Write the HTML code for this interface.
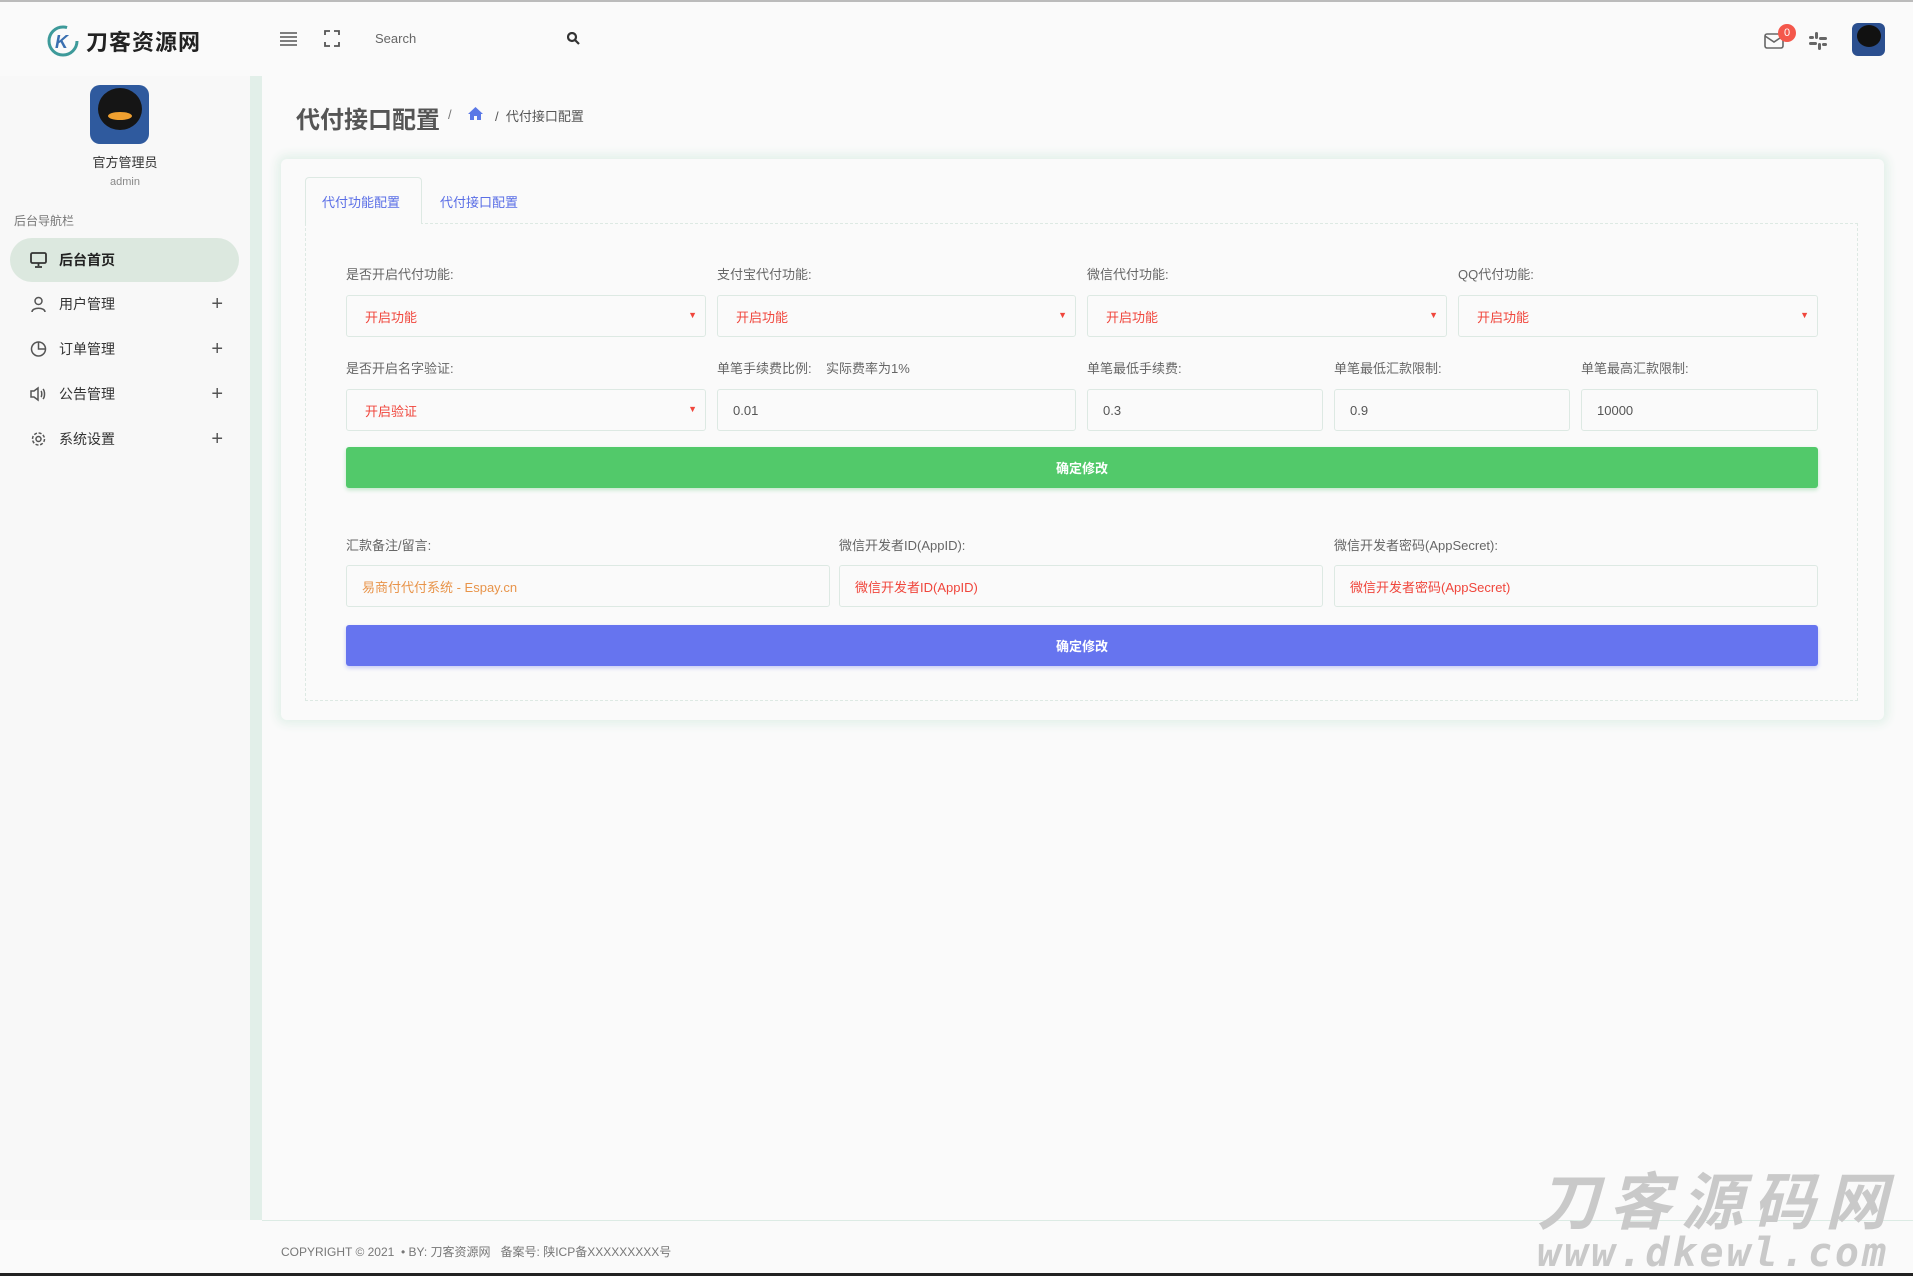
<!DOCTYPE html>
<html><head><meta charset="utf-8"><style>
*{box-sizing:border-box;margin:0;padding:0}
body{width:1913px;height:1276px;background:#fafafa;font-family:"Liberation Sans","Noto Sans CJK SC",sans-serif;position:relative;overflow:hidden;color:#555}
.abs{position:absolute}
.topbar{left:0;top:0;width:1913px;height:2px;background:#bbb}
.side{left:0;top:76px;width:250px;height:1144px;background:#f8f8f8}
.sideborder{left:250px;top:76px;width:12px;height:1144px;background:#e2efe9}
.nav{left:10px;width:229px;height:44px;border-radius:22px;font-size:14px;color:#333;display:flex;align-items:center;padding-left:20px}
.nav svg{margin-right:12px}
.nav .plus{position:absolute;right:16px;font-size:20px;color:#555}
.card{left:281px;top:159px;width:1603px;height:561px;background:#fafafa;border-radius:6px;box-shadow:0 0 10px 4px #e2f0e9}
.inner{left:305px;top:223px;width:1553px;height:478px;border:1px dashed #dde9e3}
.tab{left:305px;top:177px;width:117px;height:47px;border:1px solid #dde9e3;border-bottom:none;background:#fafafa;border-radius:4px 4px 0 0}
.lbl{font-size:13px;color:#666}
.box{height:42px;border:1px solid #dde9e3;border-radius:3px;background:#fafafa;font-size:13px;display:flex;align-items:center;padding-left:18px}
.red{color:#f0463c}
.arr{position:absolute;right:8px;top:14px;font-size:9px;color:#f0463c}
.btn{left:346px;width:1472px;height:41px;border-radius:3px;color:#fff;font-size:13px;font-weight:bold;display:flex;align-items:center;justify-content:center}
</style></head><body>
<div class="abs topbar"></div>
<svg class="abs" style="left:46px;top:24px" width="34" height="34" viewBox="0 0 34 34"><circle cx="17" cy="17" r="14" fill="none" stroke="#3d9a9a" stroke-width="3" stroke-dasharray="70 18"/><text x="9" y="24" font-size="18" font-weight="bold" fill="#3a6fb0" font-style="italic">K</text></svg>
<div class="abs" style="left:86px;top:25px;font-size:22px;font-weight:bold;color:#222;letter-spacing:1px">刀客资源网</div>
<svg class="abs" style="left:280px;top:31px" width="17" height="15"><path d="M0 2h17M0 6h17M0 10h17M0 14h17" stroke="#555" stroke-width="1.6"/></svg>
<svg class="abs" style="left:324px;top:30px" width="16" height="17" fill="none" stroke="#555" stroke-width="1.8"><path d="M1 5V1h5M10 1h5v4M15 12v4h-5M6 16H1v-4"/></svg>
<div class="abs" style="left:375px;top:31px;font-size:13px;color:#666">Search</div>
<svg class="abs" style="left:567px;top:32px" width="13" height="13" fill="none" stroke="#333" stroke-width="2.2"><circle cx="5" cy="5" r="4"/><path d="M8 8l4 4"/></svg>
<svg class="abs" style="left:1764px;top:33px" width="20" height="16" fill="none" stroke="#666" stroke-width="1.6"><rect x="1" y="1" width="18" height="14" rx="2"/><path d="M1 3l9 6 9-6"/></svg>
<div class="abs" style="left:1778px;top:24px;width:18px;height:18px;border-radius:9px;background:#f4574b;color:#fff;font-size:11px;text-align:center;line-height:18px">0</div>
<svg class="abs" style="left:1808px;top:32px" width="20" height="18" fill="#666"><rect x="7" y="0" width="3" height="7" rx="1.5"/><rect x="11" y="5" width="8" height="3" rx="1.5"/><rect x="10" y="11" width="3" height="7" rx="1.5"/><rect x="1" y="10" width="8" height="3" rx="1.5"/><rect x="1" y="4" width="5" height="3" rx="1.5"/><rect x="14" y="11" width="5" height="3" rx="1.5"/></svg>
<div class="abs" style="left:1852px;top:23px;width:33px;height:33px;border-radius:6px;background:#2b4f8f;overflow:hidden"><div style="width:24px;height:22px;background:#111;border-radius:50%;margin:2px auto 0"></div></div>
<div class="abs side"></div>
<div class="abs sideborder"></div>
<div class="abs" style="left:90px;top:85px;width:59px;height:59px;border-radius:10px;background:#2f5a9e;overflow:hidden"><div style="width:44px;height:42px;background:#151515;border-radius:50%;margin:3px auto 0;position:relative"><div style="position:absolute;left:10px;top:24px;width:24px;height:8px;background:#f0a030;border-radius:50%"></div></div></div>
<div class="abs" style="left:0;width:250px;top:152px;text-align:center;font-size:13px;color:#333">官方管理员</div>
<div class="abs" style="left:0;width:250px;top:176px;text-align:center;font-size:11px;color:#888">admin</div>
<div class="abs" style="left:14px;top:212px;font-size:12px;color:#777">后台导航栏</div>
<div class="abs nav" style="top:238px;background:#dce8df;font-weight:bold;color:#222"><svg width="17" height="16" fill="none" stroke="#333" stroke-width="1.8"><rect x="1" y="1" width="15" height="10" rx="1.5"/><path d="M8.5 11v3M5 15h7"/></svg>后台首页</div>
<div class="abs nav" style="top:282px"><svg width="17" height="16" fill="none" stroke="#555" stroke-width="1.5"><circle cx="8.5" cy="5" r="3.5"/><path d="M2 16c0-5 13-5 13 0"/></svg>用户管理<span class="plus">+</span></div>
<div class="abs nav" style="top:327px"><svg width="17" height="16" fill="none" stroke="#555" stroke-width="1.5"><circle cx="8.5" cy="8" r="7"/><path d="M8.5 1v7h7"/></svg>订单管理<span class="plus">+</span></div>
<div class="abs nav" style="top:372px"><svg width="17" height="16" fill="none" stroke="#555" stroke-width="1.5"><path d="M1 5h3l4-3v12l-4-3H1z"/><path d="M11 5c1 1 1 5 0 6M13 3c2 2 2 8 0 10"/></svg>公告管理<span class="plus">+</span></div>
<div class="abs nav" style="top:417px"><svg width="17" height="16" fill="none" stroke="#555" stroke-width="1.5"><circle cx="8.5" cy="8" r="2.5"/><circle cx="8.5" cy="8" r="6" stroke-dasharray="3 1.7"/></svg>系统设置<span class="plus">+</span></div>
<div class="abs" style="left:296px;top:100px;font-size:24px;font-weight:bold;color:#555">代付接口配置</div>
<div class="abs" style="left:448px;top:107px;font-size:13px;color:#777">/</div>
<svg class="abs" style="left:468px;top:107px" width="15" height="13" fill="#5a78e6"><path d="M7.5 0L0 7h2v6h4V9h3v4h4V7h2z"/></svg>
<div class="abs" style="left:495px;top:106px;font-size:13px;color:#555">/&nbsp; 代付接口配置</div>
<div class="abs card"></div>
<div class="abs inner"></div>
<div class="abs tab"></div>
<div class="abs" style="left:322px;top:192px;font-size:13px;color:#5a6ee6">代付功能配置</div>
<div class="abs" style="left:440px;top:192px;font-size:13px;color:#5a6ee6">代付接口配置</div>
<div class="abs lbl" style="left:346px;top:264px">是否开启代付功能:</div>
<div class="abs lbl" style="left:717px;top:264px">支付宝代付功能:</div>
<div class="abs lbl" style="left:1087px;top:264px">微信代付功能:</div>
<div class="abs lbl" style="left:1458px;top:264px">QQ代付功能:</div>
<div class="abs box red" style="left:346px;top:295px;width:360px">开启功能<span class="arr">▼</span></div>
<div class="abs box red" style="left:717px;top:295px;width:359px">开启功能<span class="arr">▼</span></div>
<div class="abs box red" style="left:1087px;top:295px;width:360px">开启功能<span class="arr">▼</span></div>
<div class="abs box red" style="left:1458px;top:295px;width:360px">开启功能<span class="arr">▼</span></div>
<div class="abs lbl" style="left:346px;top:358px">是否开启名字验证:</div>
<div class="abs lbl" style="left:717px;top:358px">单笔手续费比例: &nbsp;&nbsp;&nbsp;实际费率为1%</div>
<div class="abs lbl" style="left:1087px;top:358px">单笔最低手续费:</div>
<div class="abs lbl" style="left:1334px;top:358px">单笔最低汇款限制:</div>
<div class="abs lbl" style="left:1581px;top:358px">单笔最高汇款限制:</div>
<div class="abs box red" style="left:346px;top:389px;width:360px">开启验证<span class="arr">▼</span></div>
<div class="abs box" style="left:717px;top:389px;width:359px;color:#555;padding-left:15px">0.01</div>
<div class="abs box" style="left:1087px;top:389px;width:236px;color:#555;padding-left:15px">0.3</div>
<div class="abs box" style="left:1334px;top:389px;width:236px;color:#555;padding-left:15px">0.9</div>
<div class="abs box" style="left:1581px;top:389px;width:237px;color:#555;padding-left:15px">10000</div>
<div class="abs btn" style="top:447px;background:#52c96a;box-shadow:0 2px 4px #bfe6c8">确定修改</div>
<div class="abs lbl" style="left:346px;top:535px">汇款备注/留言:</div>
<div class="abs lbl" style="left:839px;top:535px">微信开发者ID(AppID):</div>
<div class="abs lbl" style="left:1334px;top:535px">微信开发者密码(AppSecret):</div>
<div class="abs box" style="left:346px;top:565px;width:484px;color:#e8944a;padding-left:15px">易商付代付系统 - Espay.cn</div>
<div class="abs box red" style="left:839px;top:565px;width:484px;padding-left:15px">微信开发者ID(AppID)</div>
<div class="abs box red" style="left:1334px;top:565px;width:484px;padding-left:15px">微信开发者密码(AppSecret)</div>
<div class="abs btn" style="top:625px;background:#6674ef;box-shadow:0 2px 4px #c5caf5">确定修改</div>
<div class="abs" style="left:262px;top:1220px;width:1651px;height:1px;background:#dcebe4"></div>
<div class="abs" style="left:281px;top:1243px;font-size:12px;color:#777">COPYRIGHT © 2021 &nbsp;• BY: 刀客资源网 &nbsp;&nbsp;备案号: 陕ICP备XXXXXXXXX号</div>
<div class="abs" style="left:1537px;top:1172px;font-size:62px;font-weight:bold;font-style:italic;color:#c9c9c9;letter-spacing:10px;line-height:64px">刀客源码网</div>
<div class="abs" style="left:1537px;top:1233px;font-size:40px;font-weight:bold;font-style:italic;color:#c9c9c9;letter-spacing:3px;line-height:40px;font-family:'DejaVu Sans Mono',monospace">www.dkewl.com</div>
<div class="abs" style="left:0;top:1273px;width:1913px;height:3px;background:#222"></div>
</body></html>
